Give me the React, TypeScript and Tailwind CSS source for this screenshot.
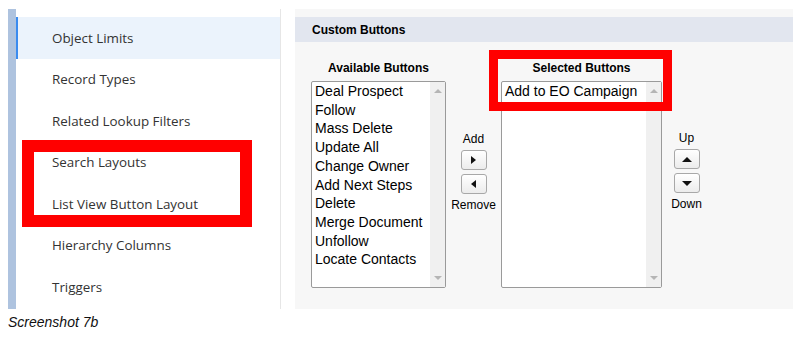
import React from 'react'

const navItems = [
  'Object Limits',
  'Record Types',
  'Related Lookup Filters',
  'Search Layouts',
  'List View Button Layout',
  'Hierarchy Columns',
  'Triggers',
]

const available = [
  'Deal Prospect',
  'Follow',
  'Mass Delete',
  'Update All',
  'Change Owner',
  'Add Next Steps',
  'Delete',
  'Merge Document',
  'Unfollow',
  'Locate Contacts',
]

function ListBox({ items, width }: { items: string[]; width: string }) {
  return (
    <div className={`${width} h-[207px] flex bg-white border border-[#9a9a9a] rounded-[2px]`}>
      <div className="flex-1 pl-[3px] font-['Liberation_Sans',Arial,sans-serif] text-[14px] leading-[18.7px] text-black whitespace-nowrap overflow-hidden">
        {items.map((it) => (
          <div key={it}>{it}</div>
        ))}
      </div>
      {/* scrollbar */}
      <div className="w-[15px] bg-[#f0f0f0] flex flex-col items-center justify-between py-[7px]">
        <div className="w-0 h-0 border-l-[4px] border-r-[4px] border-b-[4px] border-l-transparent border-r-transparent border-b-[#b5b5b5]" />
        <div className="w-0 h-0 border-l-[4px] border-r-[4px] border-t-[4px] border-l-transparent border-r-transparent border-t-[#b5b5b5]" />
      </div>
    </div>
  )
}

function ArrowButton({ dir }: { dir: 'right' | 'left' | 'up' | 'down' }) {
  const tri = {
    right: 'border-t-[4px] border-b-[4px] border-l-[5px] border-t-transparent border-b-transparent border-l-[#111]',
    left: 'border-t-[4px] border-b-[4px] border-r-[5px] border-t-transparent border-b-transparent border-r-[#111]',
    up: 'border-l-[5px] border-r-[5px] border-b-[5px] border-l-transparent border-r-transparent border-b-[#111]',
    down: 'border-l-[5px] border-r-[5px] border-t-[5px] border-l-transparent border-r-transparent border-t-[#111]',
  }[dir]
  return (
    <div className="w-[26px] h-[20px] rounded-[3px] border border-[#a8a8a8] bg-gradient-to-b from-white to-[#ececec] flex items-center justify-center">
      <div className={`w-0 h-0 ${tri}`} />
    </div>
  )
}

export default function App() {
  return (
    <div className="w-[806px] h-[344px] bg-white relative overflow-hidden">
      <div className="flex pt-[9px] pl-[8px]">
        {/* sidebar */}
        <div className="flex h-[300px]">
          <div className="w-[8px] bg-[#aec3df]" />
          <div className="w-[265px] bg-white border-r border-[#e6e6e6] pt-[8px] font-['Open_Sans','Noto_Sans',sans-serif] text-[13.4px] text-[#333333]">
            {navItems.map((it, i) => (
              <div
                key={it}
                className={`h-[41.5px] flex items-center pl-[34px] border-l-2 ${
                  i === 0 ? 'bg-[#ebf3fc] border-[#3a8bef]' : 'border-transparent'
                }`}
              >
                {it}
              </div>
            ))}
          </div>
        </div>

        {/* custom buttons panel */}
        <div className="ml-[14px] w-[498px] h-[300px] bg-[#f7f7f7] pt-[8px] font-['Liberation_Sans',Arial,sans-serif]">
          <div className="h-[25px] bg-[#e2e6ef] pl-[17px] flex items-center text-[12px] font-bold text-black">
            Custom Buttons
          </div>
          <div className="flex pl-[16px] pt-[19px] text-black">
            <div className="flex flex-col items-center">
              <div className="text-[12px] leading-[14px] font-bold mb-[6px]">Available Buttons</div>
              <ListBox items={available} width="w-[135px]" />
            </div>
            <div className="w-[55px] flex flex-col items-center pt-[71px] text-[12px] leading-[14px]">
              <div>Add</div>
              <div className="mt-[4px]"><ArrowButton dir="right" /></div>
              <div className="mt-[4px]"><ArrowButton dir="left" /></div>
              <div className="mt-[4px]">Remove</div>
            </div>
            <div className="flex flex-col items-center">
              <div className="text-[12px] leading-[14px] font-bold mb-[6px]">Selected Buttons</div>
              <ListBox items={['Add to EO Campaign']} width="w-[161px]" />
            </div>
            <div className="w-[49px] flex flex-col items-center pt-[70px] text-[12px] leading-[14px]">
              <div>Up</div>
              <div className="mt-[4px]"><ArrowButton dir="up" /></div>
              <div className="mt-[4px]"><ArrowButton dir="down" /></div>
              <div className="mt-[4px]">Down</div>
            </div>
          </div>
        </div>
      </div>

      <div className="pl-[8px] pt-[3px] italic text-[14px] text-[#111111] font-['Liberation_Sans',Arial,sans-serif]">
        Screenshot 7b
      </div>

      {/* red annotation boxes */}
      <div className="absolute left-[22px] top-[140px] w-[230px] h-[87px] border-[12px] border-[#ff0000]" />
      <div className="absolute left-[489px] top-[50px] w-[183px] h-[61px] border-[9px] border-[#ff0000]" />
    </div>
  )
}
